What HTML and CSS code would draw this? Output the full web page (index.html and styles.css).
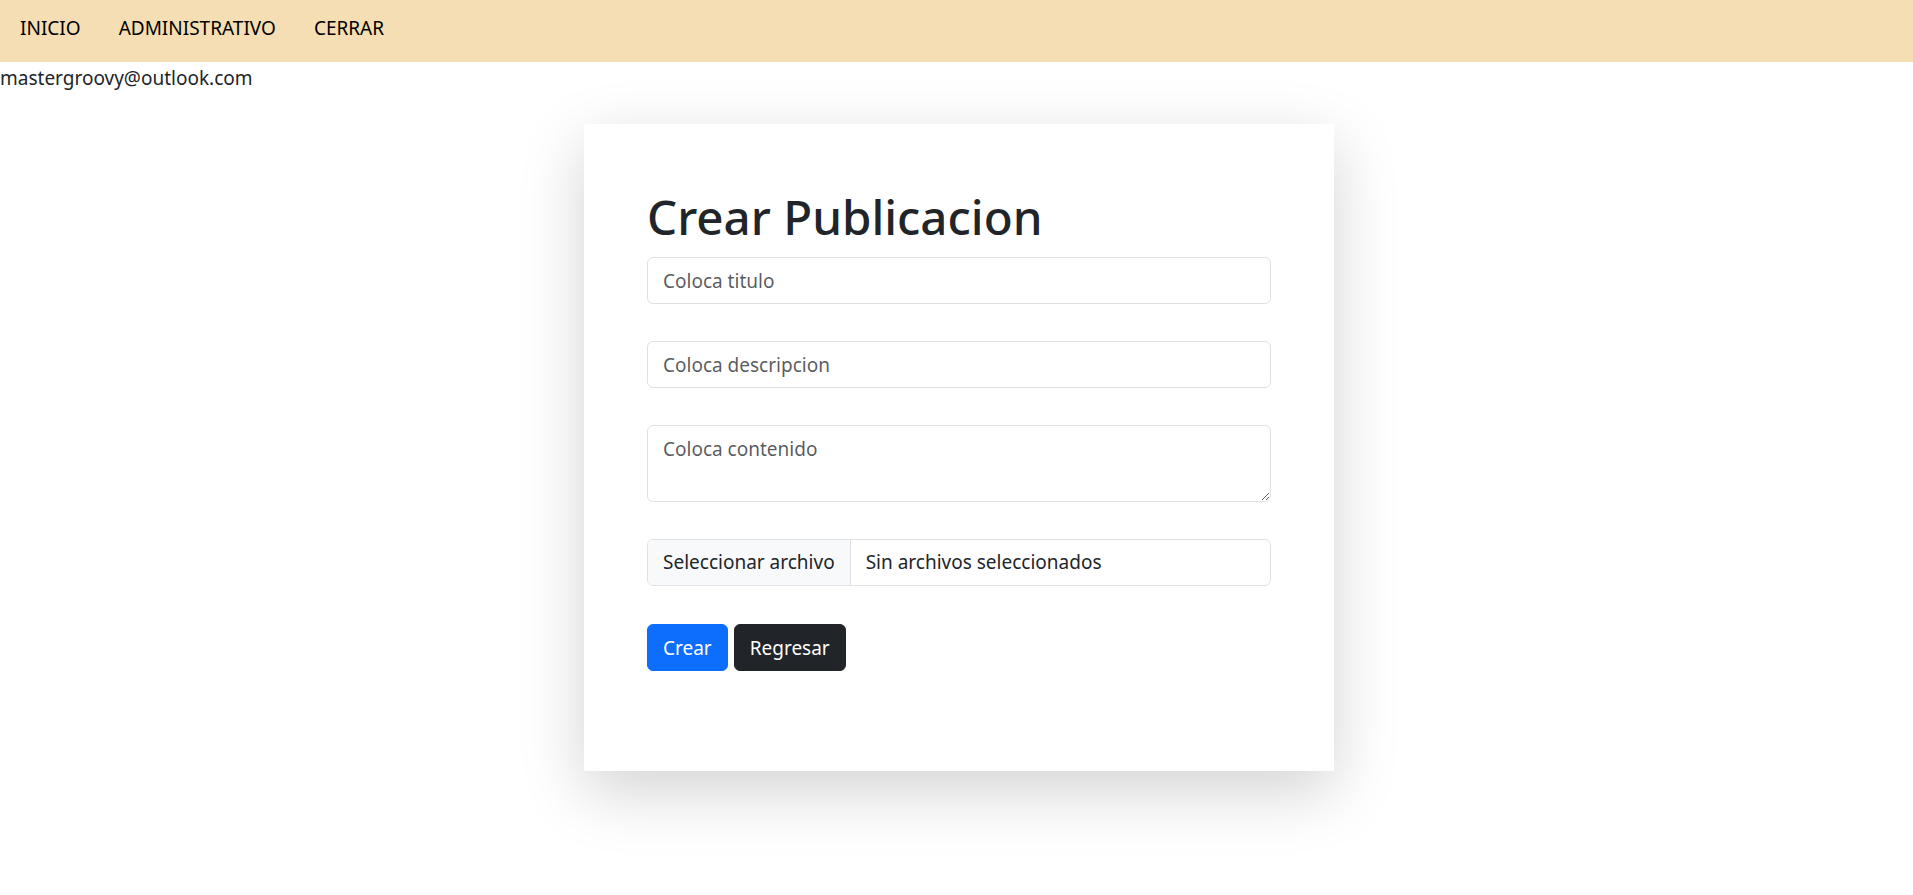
FILE: index.html
```html
<!DOCTYPE html>
<html lang="es">
<head>
<meta charset="utf-8">
<title>Crear Publicacion</title>
<link rel="stylesheet" href="styles.css">
</head>
<body>
<nav class="topnav">
  <a class="nav-link" href="#">INICIO</a>
  <a class="nav-link" href="#">ADMINISTRATIVO</a>
  <a class="nav-link" href="#">CERRAR</a>
</nav>
<div class="user-email">mastergroovy@outlook.com</div>
<main class="page">
  <section class="card">
    <h1 class="card-title">Crear Publicacion</h1>
    <form class="post-form">
      <input class="field" type="text" placeholder="Coloca titulo">
      <input class="field" type="text" placeholder="Coloca descripcion">
      <textarea class="field area" rows="2" placeholder="Coloca contenido"></textarea>
      <div class="file-field">
        <span class="file-btn">Seleccionar archivo</span>
        <span class="file-name">Sin archivos seleccionados</span>
      </div>
      <div class="actions">
        <button class="btn btn-primary" type="button">Crear</button>
        <button class="btn btn-dark" type="button">Regresar</button>
      </div>
    </form>
  </section>
</main>
</body>
</html>
```
FILE: styles.css
```css
* { box-sizing: border-box; }
html, body { margin: 0; padding: 0; }
body {
  font-family: "Noto Sans", "Open Sans", sans-serif;
  font-size: 19px;
  color: #212529;
  background: #fff;
}
.topnav {
  height: 62px;
  background: #f5deb3;
  display: flex;
  align-items: flex-start;
  padding: 13px 0 0 1px;
}
.nav-link {
  color: #000;
  text-decoration: none;
  font-size: 19px;
  line-height: 30px;
  padding: 0 19px;
}
.user-email {
  padding-top: 3px;
  line-height: 26px;
  font-size: 19px;
}
.page {
  padding: 33px 0 120px 5px;
}
.card {
  width: 750px;
  margin: 0 auto;
  background: #fff;
  padding: 63px 63px 100px 63px;
  box-shadow: 0 20px 60px rgba(0,0,0,.175);
}
.card-title {
  margin: 0 0 10px 0;
  font-size: 47.5px;
  line-height: 60px;
  font-weight: 540;
}
.post-form {
  display: flex;
  flex-direction: column;
  gap: 37px;
}
.field {
  display: block;
  width: 100%;
  height: 47px;
  padding: 0 15px;
  border: 1px solid #dee2e6;
  border-radius: 6px;
  font-family: inherit;
  font-size: 19px;
  color: #212529;
  background: #fff;
  outline: none;
}
.field::placeholder { color: rgba(33,37,41,.75); }
.area {
  height: 77px;
  padding: 8px 15px;
  line-height: 30px;
  resize: vertical;
}
.file-field {
  display: flex;
  height: 47px;
  border: 1px solid #dee2e6;
  border-radius: 6px;
  overflow: hidden;
  line-height: 45px;
}
.file-btn {
  background: #f8f9fa;
  padding: 0 15px;
  border-right: 1px solid #dee2e6;
}
.file-name {
  padding: 0 15px;
}
.actions {
  display: flex;
  gap: 6px;
  margin-top: 1px;
}
.btn {
  height: 47px;
  padding: 0 15px;
  border: 1px solid transparent;
  border-radius: 6px;
  font-family: inherit;
  font-size: 19px;
  color: #fff;
  cursor: pointer;
}
.btn-primary { background: #0d6efd; border-color: #0d6efd; }
.btn-dark { background: #212529; border-color: #212529; }
```
